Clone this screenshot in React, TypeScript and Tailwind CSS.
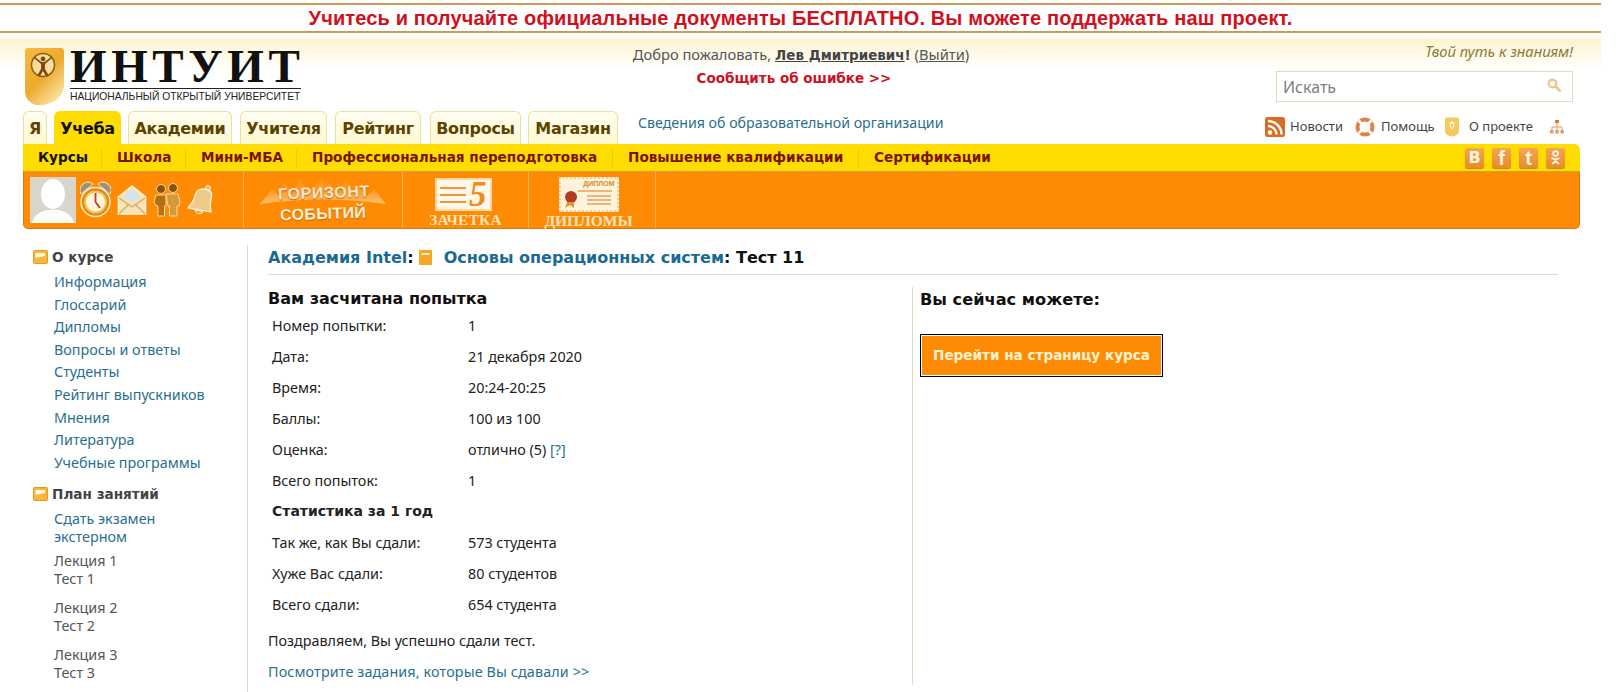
const boldFont = "font-['DejaVu_Sans',sans-serif] font-bold";

function Shield() {
  return (
    <svg width="41" height="59" viewBox="0 0 41 59" className="shrink-0">
      <defs>
        <linearGradient id="shieldFill" x1="0" y1="0" x2="0.7" y2="1">
          <stop offset="0" stopColor="#f9b93f" />
          <stop offset="0.55" stopColor="#eda92e" />
          <stop offset="1" stopColor="#fbe3a0" />
        </linearGradient>
      </defs>
      <path d="M1 4 Q1 1 4 1 H37 Q40 1 40 4 V38 Q40 50 26 56 Q19 59 12 58 Q1 55 1 44 Z" fill="url(#shieldFill)" />
      <circle cx="19" cy="18" r="11.5" fill="#f7dca0" stroke="#8d5b16" strokeWidth="1.5" />
      <path d="M19 9.5 a2.4 2.4 0 1 1 -.01 0 M10 11 L17 17 V22 L13 29 H16 L19 24 L22 29 H25 L21 22 V17 L28 11 L27 10 L20.5 15 H17.5 L11 10 Z" fill="#7c4a10" />
    </svg>
  );
}

function ClockIcon() {
  return (
    <svg width="31" height="38" viewBox="0 0 31 38">
      <path d="M1 13 A8 8 0 0 1 13 3 Z M18 3 A8 8 0 0 1 30 13 Z" fill="#9a8f80" stroke="#ffe9c0" strokeWidth="1" />
      <circle cx="15.5" cy="21" r="14.5" fill="#d98a1c" stroke="#ffe9c0" strokeWidth="1.5" />
      <circle cx="15.5" cy="21" r="10.5" fill="#fff6dc" stroke="#f5c34a" strokeWidth="2" />
      <path d="M15.5 21 V12 M15.5 21 L20 27" stroke="#c0392b" strokeWidth="1.8" />
    </svg>
  );
}

function MailIcon() {
  return (
    <svg width="30" height="32" viewBox="0 0 30 32">
      <path d="M1.5 13 L15 2 L28.5 13 V30 H1.5 Z" fill="#f8e3b6" stroke="#fff3d6" strokeWidth="1.6" />
      <path d="M6 12 L15 5 L24 12 L15 19 Z" fill="#d5e4ea" />
      <path d="M2 14 L15 23 L28 14 M2 30 L12 20 M28 30 L18 20" fill="none" stroke="#d3a85e" strokeWidth="1.1" />
    </svg>
  );
}

function PeopleIcon() {
  return (
    <svg width="28" height="34" viewBox="0 0 28 34">
      <circle cx="8" cy="6" r="4.5" fill="#8a5410" stroke="#ffd9a0" />
      <circle cx="20" cy="5" r="4.5" fill="#8a5410" stroke="#ffd9a0" />
      <path d="M1 19 L3 12 H13 V23 H11.5 V33 H5 V23 H3 Z" fill="#b5700f" stroke="#ffd9a0" />
      <path d="M13 11 H25 L27 19 L26 23 H24 V33 H16.5 V23 H15 Z" fill="#d49a3a" stroke="#ffd9a0" />
    </svg>
  );
}

function BellIcon() {
  return (
    <svg width="26" height="32" viewBox="0 0 26 32">
      <circle cx="21" cy="4" r="2.5" fill="#e6c07e" stroke="#fff0d0" />
      <path d="M19 5.5 C10 3 8 10 7 15 C6 19 3 21 1 24 L24 28 C23 24 23 20 24 15 C25 11 26 7 19 5.5 Z" fill="#eec98c" stroke="#fff0d0" strokeWidth="1.4" />
      <path d="M8 26 A4.5 4.5 0 0 0 16 28 Z" fill="#c99a4a" stroke="#fff0d0" />
    </svg>
  );
}

function RaysIcon() {
  return (
    <svg width="130" height="30" viewBox="0 0 130 30">
      <defs>
        <linearGradient id="rayFill" x1="0" y1="1" x2="0" y2="0">
          <stop offset="0" stopColor="#ffe2b0" stopOpacity="0.65" />
          <stop offset="0.5" stopColor="#ffc98a" stopOpacity="0.25" />
          <stop offset="1" stopColor="#ffc98a" stopOpacity="0" />
        </linearGradient>
      </defs>
      <path d="M2 29 L14 14 L22 22 L26 6 L34 20 L42 3 L50 18 L65 1 L80 18 L88 3 L96 20 L104 6 L108 22 L116 14 L128 29 Q65 20 2 29 Z" fill="url(#rayFill)" />
    </svg>
  );
}

function RecordBook() {
  return (
    <div className="mt-px -ml-[5px] w-[57px] h-[33px] bg-[#fff8e8] border-2 border-[#fcd9a0] flex items-center gap-[3px] px-[3px]">
      <div className="w-[29px] flex flex-col gap-[5px]">
        <div className="h-[2px] bg-[#f0963c]" />
        <div className="h-[2px] bg-[#f0963c]" />
        <div className="h-[2px] bg-[#f0963c]" />
      </div>
      <span className="font-['Liberation_Serif',serif] font-bold italic text-[35px] leading-none text-[#f08a1a]">5</span>
    </div>
  );
}

function DiplomaCard() {
  return (
    <div className="w-[60px] h-[35px] bg-[#fff3dc] border-2 border-dotted border-[#fbd08e] flex flex-col">
      <div className="text-right pr-[2px] font-['Liberation_Sans',sans-serif] font-bold text-[7px] leading-[9px] text-[#d9882a]">ДИПЛОМ</div>
      <svg width="56" height="22" viewBox="0 0 56 22">
        <circle cx="10" cy="9" r="6" fill="#b23a22" />
        <path d="M6 14 L4 20 L9 17 L13 20 L13 14 Z" fill="#e0962e" />
        <path d="M17 3 H51 M26 8 H50 M26 12 H50 M26 16 H50" stroke="#e8a35a" strokeWidth="1.5" />
      </svg>
    </div>
  );
}

function FolderIcon() {
  return (
    <svg width="15" height="14" viewBox="0 0 15 14" className="shrink-0">
      <rect x="0.5" y="0.5" width="14" height="13" rx="1" fill="#f6b73c" stroke="#e9972a" />
      <path d="M2.5 3 H12 V6 L7 7 L2.5 8 Z" fill="#fff6d8" />
    </svg>
  );
}

function SearchIcon() {
  return (
    <svg width="14" height="14" viewBox="0 0 14 14">
      <circle cx="5.5" cy="5.5" r="3.8" fill="none" stroke="#e8c98c" strokeWidth="2.4" />
      <path d="M8.5 8.5 L12.6 12.6" stroke="#e8c98c" strokeWidth="2.8" strokeLinecap="round" />
    </svg>
  );
}

function RssIcon() {
  return (
    <svg width="20" height="20" viewBox="0 0 20 20" className="shrink-0">
      <rect width="20" height="20" rx="2.5" fill="#dd6a22" />
      <circle cx="5" cy="15.5" r="2.2" fill="#fff" />
      <path d="M3 9 A8.5 8.5 0 0 1 11.5 17.5 M3 4 A13.5 13.5 0 0 1 16.5 17.5" fill="none" stroke="#fff" strokeWidth="2.4" />
    </svg>
  );
}

function LifebuoyIcon() {
  return (
    <svg width="20" height="20" viewBox="0 0 20 20" className="shrink-0">
      <circle cx="10" cy="10" r="7.5" fill="none" stroke="#e2804a" strokeWidth="4" />
      <path d="M3.5 3.5 L7.5 7.5 M16.5 3.5 L12.5 7.5 M3.5 16.5 L7.5 12.5 M16.5 16.5 L12.5 12.5" stroke="#fff" strokeWidth="2.6" />
    </svg>
  );
}

function SmallShieldIcon() {
  return (
    <svg width="16" height="20" viewBox="0 0 16 20" className="shrink-0">
      <path d="M1 2 Q1 .5 2.5 .5 H13.5 Q15 .5 15 2 V13 Q15 18 9 19.5 Q1 19 1 14 Z" fill="#f5c95a" />
      <path d="M8 4 L10 9 L8 12 L6 9 Z M5 6 H11" fill="none" stroke="#fff" strokeWidth="1" />
    </svg>
  );
}

function SitemapIcon() {
  return (
    <svg width="14" height="16" viewBox="0 0 14 16" className="shrink-0">
      <path d="M7 4 V8 M2 11 V8 H12 V11 M7 8 V11" fill="none" stroke="#e09a5a" strokeWidth="1" />
      <rect x="5" y="1" width="4" height="3" fill="#e2753a" />
      <rect x="0" y="11" width="3.5" height="3.5" fill="#e2a070" />
      <rect x="5.2" y="11" width="3.5" height="3.5" fill="#e2a070" />
      <rect x="10.4" y="11" width="3.5" height="3.5" fill="#e2a070" />
    </svg>
  );
}

function OkGlyph() {
  return (
    <svg width="11" height="15" viewBox="0 0 11 15">
      <circle cx="5.5" cy="3.6" r="2.4" fill="none" stroke="#fff4de" strokeWidth="1.8" />
      <path d="M1.5 8 Q5.5 10.5 9.5 8 M5.5 9.5 V11 M2.2 14 L5.5 11 L8.8 14" fill="none" stroke="#fff4de" strokeWidth="1.8" />
    </svg>
  );
}

function SocialButton({ children, className }: { children: React.ReactNode; className?: string }) {
  return (
    <div className={`w-[19px] h-[20px] rounded-[2px] bg-[linear-gradient(#f5a653,#e98a2c)] shadow-[0_1px_1px_#c98a10] flex items-center justify-center text-[#fff4de] font-bold leading-none ${className ?? ""}`}>
      {children}
    </div>
  );
}

const tabs = [
  { label: "Я", w: "w-[24px]", mr: "mr-[7px]" },
  { label: "Учеба", w: "w-[67px]", mr: "mr-[7px]", active: true },
  { label: "Академии", w: "w-[104px]", mr: "mr-[8px]" },
  { label: "Учителя", w: "w-[87px]", mr: "mr-[8px]" },
  { label: "Рейтинг", w: "w-[86px]", mr: "mr-[9px]" },
  { label: "Вопросы", w: "w-[91px]", mr: "mr-[7px]" },
  { label: "Магазин", w: "w-[90px]", mr: "mr-[0px]" },
];

const subMenu = [
  { label: "Курсы", w: "w-[79px]", cur: true },
  { label: "Школа", w: "w-[84px]" },
  { label: "Мини-МБА", w: "w-[111px]" },
  { label: "Профессиональная переподготовка", w: "w-[316px]" },
  { label: "Повышение квалификации", w: "w-[246px]" },
  { label: "Сертификации", w: "w-[130px]", last: true },
];

const courseLinks = ["Информация", "Глоссарий", "Дипломы", "Вопросы и ответы", "Студенты", "Рейтинг выпускников", "Мнения", "Литература", "Учебные программы"];

const attempt = [
  ["Номер попытки:", "1"],
  ["Дата:", "21 декабря 2020"],
  ["Время:", "20:24-20:25"],
  ["Баллы:", "100 из 100"],
];

const stats = [
  ["Так же, как Вы сдали:", "573 студента"],
  ["Хуже Вас сдали:", "80 студентов"],
  ["Всего сдали:", "654 студента"],
];

function Row({ label, children }: { label: string; children: React.ReactNode }) {
  return (
    <div className="flex h-[31px] items-center pl-[4px]">
      <div className="w-[196px]">{label}</div>
      <div>{children}</div>
    </div>
  );
}

export default function App() {
  return (
    <div className="h-[692px] overflow-hidden bg-white pt-[3px] font-['Noto_Sans',sans-serif] text-[14.35px] text-[#222]">
      {/* баннер */}
      <div className="w-[1601px] h-[30px] border-y-2 border-[#c99b55] flex items-center justify-center font-['Liberation_Sans',sans-serif] font-bold text-[20px] tracking-[0.14px] text-[#d0101c]">
        Учитесь и получайте официальные документы БЕСПЛАТНО. Вы можете поддержать наш проект.
      </div>

      {/* шапка */}
      <div className="mt-[5px] w-[1601px] bg-[linear-gradient(#fdf3cf,#ffffff_32px)]">
        <div className="flex h-[73px]">
          <div className="w-[324px] pl-[24px] pt-[9px] flex">
            <Shield />
            <div className="ml-[5px] w-[231px]">
              <div className="font-['Liberation_Serif',serif] font-bold text-[47px] leading-[38px] tracking-[4.6px] text-[#111] whitespace-nowrap">ИНТУИТ</div>
              <div className="border-t border-[#222] mt-[3px] pt-[2px] font-['Liberation_Sans',sans-serif] text-[10.3px] leading-[12px] text-[#222] whitespace-nowrap">НАЦИОНАЛЬНЫЙ ОТКРЫТЫЙ УНИВЕРСИТЕТ</div>
            </div>
          </div>
          <div className="w-[938px] text-center pt-[6px]">
            <div className="pl-[16px] leading-[20px] text-[14.7px] text-[#555]">
              Добро пожаловать, <a className={`${boldFont} text-[13.5px] underline text-[#444]`}>Лев Дмитриевич</a><span className={`${boldFont} text-[13.5px] text-[#444]`}>!</span> (<a className="underline">Выйти</a>)
            </div>
            <div className={`pl-[2px] ${boldFont} text-[13.5px] leading-[20px] mt-[3px] text-[#cc1122]`}>Сообщить об ошибке &gt;&gt;</div>
          </div>
          <div className="w-[311px] pl-[14px] pt-[3px]">
            <div className="text-right italic text-[14.8px] leading-[20px] text-[#8d7a35]">Твой путь к знаниям!</div>
            <div className="mt-[10px] h-[31px] border border-[#e2dcb4] bg-white flex items-center justify-between pl-[6px] pr-[11px]">
              <span className="text-[16px] text-[#808080]">Искать</span>
              <div className="-mt-[4px]"><SearchIcon /></div>
            </div>
          </div>
        </div>

        <div className="flex h-[33px] items-end">
          <div className="flex ml-[23px] w-[615px]">
            {tabs.map((t) => (
              <div
                key={t.label}
                className={`${t.w} ${t.mr} shrink-0 h-[33px] pt-px rounded-t-[6px] border border-b-0 flex items-center justify-center ${boldFont} text-[16px] tracking-[-0.3px] ${t.active ? "bg-[#ffdd00] border-[#ffdd00] text-[#111]" : "bg-[linear-gradient(#fffdf0,#fff9cf)] border-[#eadfa4] text-[#5c4300]"}`}
              >
                {t.label}
              </div>
            ))}
          </div>
          <a className="h-full pt-[1px] text-[14.2px] text-[#2a6f8f]">Сведения об образовательной организации</a>
          <div className="ml-auto mr-[37px] w-[299px] h-full flex items-center text-[13px] text-[#444] pb-[2px]">
            <RssIcon />
            <span className="ml-[5px] w-[65px]">Новости</span>
            <LifebuoyIcon />
            <span className="ml-[6px] w-[63px]">Помощь</span>
            <SmallShieldIcon />
            <span className="ml-[9px] w-[81px]">О проекте</span>
            <SitemapIcon />
          </div>
        </div>
      </div>

      {/* жёлтое меню */}
      <div className="ml-[23px] w-[1557px] h-[28px] bg-[#ffdd00] rounded-tr-[6px] flex items-center pl-[15px] pr-[15px] border-b border-[#c9a33a]">
        {subMenu.map((m) => (
          <div key={m.label} className={`${m.w} h-[18px] flex items-center whitespace-nowrap ${boldFont} text-[13.6px] ${m.cur ? "text-[#111]" : "text-[#7a1200]"}`}>
            <span className="flex-1">{m.label}</span>
            {!m.last && <span className="w-px h-[18px] bg-[#f0c414] mr-[15px]" />}
          </div>
        ))}
        <div className="ml-auto flex gap-[8px]">
          <SocialButton className="text-[16px] font-['DejaVu_Sans',sans-serif]">В</SocialButton>
          <SocialButton className="text-[20px] font-['Liberation_Sans',sans-serif]">f</SocialButton>
          <SocialButton className="text-[20px] font-['Liberation_Sans',sans-serif]">t</SocialButton>
          <SocialButton><OkGlyph /></SocialButton>
        </div>
      </div>

      {/* оранжевая панель */}
      <div className="ml-[23px] w-[1557px] h-[57px] bg-[#ff8a04] rounded-b-[5px] border border-t-0 border-[#d77a10] flex">
        <div className="w-[220px] h-full border-r border-[#fbb060] flex items-center pl-[6px]">
          <div className="w-[46px] h-[46px] bg-[#d8d5cb] overflow-hidden">
            <svg width="46" height="46" viewBox="0 0 46 46">
              <ellipse cx="23" cy="17" rx="12" ry="15" fill="#fff" />
              <path d="M2 46 Q4 36 17 33 H29 Q42 36 44 46 Z" fill="#fff" />
            </svg>
          </div>
          <div className="ml-[4px]"><ClockIcon /></div>
          <div className="ml-[6px]"><MailIcon /></div>
          <div className="ml-[6px]"><PeopleIcon /></div>
          <div className="ml-[6px]"><BellIcon /></div>
        </div>
        <div className="w-[159px] h-full border-r border-[#fbb060] flex flex-col items-center pt-[3px]">
          <div className="h-[30px] flex justify-center"><div className="relative"><RaysIcon /><span className={`absolute left-[20px] top-[6px] whitespace-nowrap font-['Liberation_Sans',sans-serif] font-bold text-[16px] tracking-[0.6px] text-[#f8e6cf] [text-shadow:0_1px_1px_#b8660a] -rotate-2`}>ГОРИЗОНТ</span></div></div>
          <div className="font-['Liberation_Sans',sans-serif] font-bold text-[16px] leading-[18px] tracking-[0.4px] text-[#fff0d8] [text-shadow:0_1px_1px_#b8660a] -rotate-2">СОБЫТИЙ</div>
        </div>
        <div className="w-[126px] h-full border-r border-[#fbb060] flex flex-col items-center pt-[5px]">
          <RecordBook />
          <div className="font-['Liberation_Serif',serif] font-bold text-[15.5px] leading-[18px] tracking-[0.15px] text-[#ffe4bc]">ЗАЧЕТКА</div>
        </div>
        <div className="w-[127px] h-full border-r border-[#fbb060] flex flex-col items-center pt-[5px] pr-[7px]">
          <DiplomaCard />
          <div className="font-['Liberation_Serif',serif] font-bold text-[15.5px] leading-[18px] text-[#ffe4bc]">ДИПЛОМЫ</div>
        </div>
      </div>

      {/* контент */}
      <div className="flex mt-[16px]">
        <aside className="w-[247px] shrink-0 pl-[33px]">
          <div className={`flex items-center gap-[4px] h-[24px] ${boldFont} text-[13.6px] text-[#444]`}>
            <FolderIcon />О курсе
          </div>
          <div className="pl-[21px] mt-[2px] text-[#2a6f8f]">
            {courseLinks.map((l) => (
              <div key={l} className="h-[22.6px] leading-[22.6px]">{l}</div>
            ))}
          </div>
          <div className={`flex items-center gap-[4px] h-[24px] mt-[8px] ${boldFont} text-[13.6px] text-[#444]`}>
            <FolderIcon />План занятий
          </div>
          <div className="pl-[21px] mt-[4px] leading-[18px]">
            <div className="text-[#2a6f8f]">Сдать экзамен<br />экстерном</div>
            <div className="mt-[6px] text-[#555]">Лекция 1<br />Тест 1</div>
            <div className="mt-[11px] text-[#555]">Лекция 2<br />Тест 2</div>
            <div className="mt-[11px] text-[#555]">Лекция 3<br />Тест 3</div>
          </div>
        </aside>

        <main className="flex-1 border-l border-[#e3dcc0] pl-[20px] h-[470px] pr-[64px]">
          <div className={`h-[30px] pb-[4px] flex items-center border-b border-[#e3dcc0] ${boldFont} text-[16px] text-[#111] whitespace-nowrap`}>
            <span className="text-[#1a6a94]">Академия Intel</span>:
            <span className="ml-[5px] mr-[12px]"><svg width="13" height="15" viewBox="0 0 13 15"><rect width="13" height="15" rx="1" fill="#f5a623" /><rect x="2.5" y="3" width="8" height="2" fill="#fff3cf" /></svg></span>
            <span className="text-[#1a6a94]">Основы операционных систем</span>: Тест 11
          </div>
          <div className="flex mt-[12px]">
            <div className="w-[644px] h-[398px] pt-px">
              <div className={`${boldFont} text-[16px] leading-[22px] text-[#111]`}>Вам засчитана попытка</div>
              <div className="text-[#222]">
                {attempt.map(([a, b]) => <Row key={a} label={a}>{b}</Row>)}
                <Row label="Оценка:">отлично (5) <a className="text-[#2a6f8f]">[?]</a></Row>
                <Row label="Всего попыток:">1</Row>
                <div className={`h-[31px] flex items-center pl-[4px] ${boldFont} text-[14px]`}>Статистика за 1 год</div>
                {stats.map(([a, b]) => <Row key={a} label={a}>{b}</Row>)}
              </div>
              <div className="mt-[11px] leading-[20px] text-[#222]">Поздравляем, Вы успешно сдали тест.</div>
              <div className="mt-[11px] leading-[20px] tracking-[0.12px] text-[#2a6f8f]">Посмотрите задания, которые Вы сдавали &gt;&gt;</div>
            </div>
            <div className="border-l border-[#e3dcc0] pl-[7px] h-[398px]">
              <div className={`pt-px ${boldFont} text-[16.2px] leading-[24px] text-[#111]`}>Вы сейчас можете:</div>
              <div className="mt-[22px] w-[243px] h-[43px] border border-black p-px">
                <div className={`h-full bg-[#ff8a04] flex items-center justify-center ${boldFont} text-[13.6px] text-[#fff3d0]`}>Перейти на страницу курса</div>
              </div>
            </div>
          </div>
        </main>
      </div>
    </div>
  );
}
